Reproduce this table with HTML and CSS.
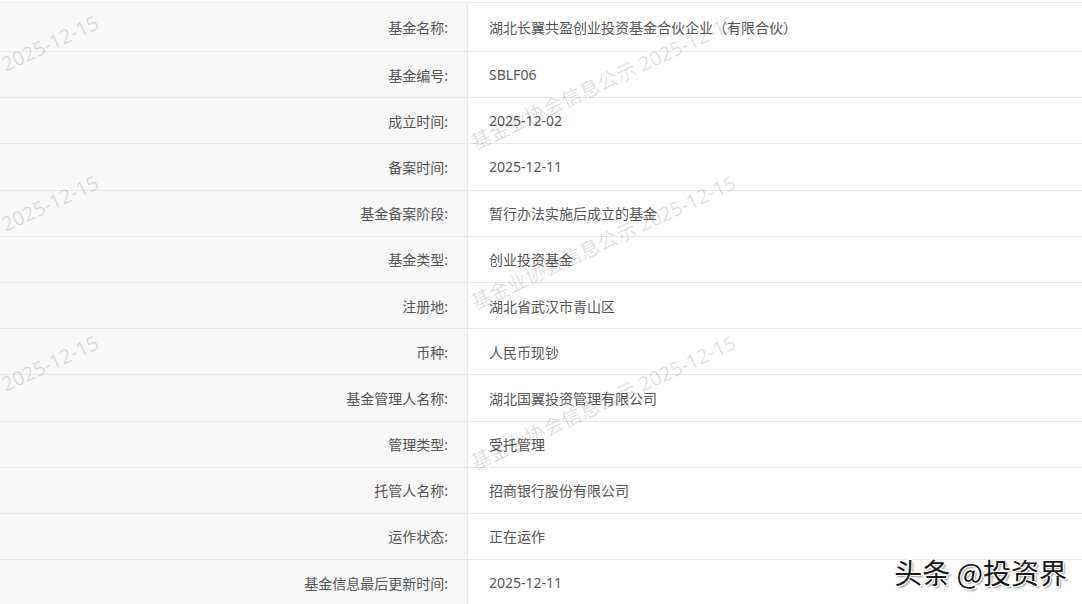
FILE: index.html
```html
<!DOCTYPE html>
<html lang="zh-CN">
<head>
  <meta charset="UTF-8" />
  <meta name="viewport" content="width=device-width, initial-scale=1.0"/>
  <title>基金信息公示</title>
  <link rel="stylesheet" href="styles.css">
</head>
<body>

  <div class="page">
    <!-- 基金信息表 -->
    <div class="info-table">
      <div class="row"><div class="label">基金名称:</div><div class="value">湖北长翼共盈创业投资基金合伙企业（有限合伙）</div></div>
      <div class="row"><div class="label">基金编号:</div><div class="value">SBLF06</div></div>
      <div class="row"><div class="label">成立时间:</div><div class="value">2025-12-02</div></div>
      <div class="row"><div class="label">备案时间:</div><div class="value">2025-12-11</div></div>
      <div class="row"><div class="label">基金备案阶段:</div><div class="value">暂行办法实施后成立的基金</div></div>
      <div class="row"><div class="label">基金类型:</div><div class="value">创业投资基金</div></div>
      <div class="row"><div class="label">注册地:</div><div class="value">湖北省武汉市青山区</div></div>
      <div class="row"><div class="label">币种:</div><div class="value">人民币现钞</div></div>
      <div class="row"><div class="label">基金管理人名称:</div><div class="value">湖北国翼投资管理有限公司</div></div>
      <div class="row"><div class="label">管理类型:</div><div class="value">受托管理</div></div>
      <div class="row"><div class="label">托管人名称:</div><div class="value">招商银行股份有限公司</div></div>
      <div class="row"><div class="label">运作状态:</div><div class="value">正在运作</div></div>
      <div class="row"><div class="label">基金信息最后更新时间:</div><div class="value">2025-12-11</div></div>
    </div>

    <!-- 水印 -->
    <div class="watermarks">
      <span class="wm wm-left wm-r1">基金业协会信息公示 2025-12-15</span>
      <span class="wm wm-left wm-r2">基金业协会信息公示 2025-12-15</span>
      <span class="wm wm-left wm-r3">基金业协会信息公示 2025-12-15</span>
      <span class="wm wm-mid wm-r1">基金业协会信息公示 2025-12-15</span>
      <span class="wm wm-mid wm-r2">基金业协会信息公示 2025-12-15</span>
      <span class="wm wm-mid wm-r3">基金业协会信息公示 2025-12-15</span>
    </div>

    <div class="brand">头条 @投资界</div>
  </div>

</body>
</html>
```

FILE: styles.css
```css
body {
  margin: 0;
  padding: 0;
  background: #fff;
  font-family: "Noto Sans", "Noto Sans CJK SC", sans-serif;
  overflow: hidden;
}

.page {
  position: relative;
  width: 1082px;
  height: 604px;
  overflow: hidden;
}

.info-table {
  padding-top: 2px;
}

.row {
  display: flex;
  height: 46.2px;
  box-sizing: border-box;
  border-bottom: 1px solid #e9e9e9;
}

.row:first-child {
  height: 50px;
  border-top: 1px solid #ececec;
}

.label {
  width: 468px;
  box-sizing: border-box;
  padding-right: 19px;
  background: #f7f7f7;
  border-right: 1px solid #e9e9e9;
  color: #555;
  font-size: 14px;
  display: flex;
  align-items: center;
  justify-content: flex-end;
}

.value {
  flex: 1;
  padding-left: 21px;
  color: #555;
  font-size: 14px;
  display: flex;
  align-items: center;
}

.watermarks {
  position: absolute;
  inset: 0;
  pointer-events: none;
}

.wm {
  position: absolute;
  white-space: nowrap;
  font-size: 20px;
  line-height: 20px;
  color: rgba(0, 0, 0, 0.13);
  transform-origin: 0 50%;
  transform: rotate(-25deg);
}

.wm-left { left: -165px; }
.wm-mid { left: 472px; }
.wm-r1 { top: 134px; }
.wm-r2 { top: 294px; }
.wm-r3 { top: 454px; }

.brand {
  position: absolute;
  right: 15px;
  bottom: 16px;
  font-size: 28px;
  line-height: 32px;
  color: #1a1a1a;
  font-family: "Noto Sans CJK SC", sans-serif;
  text-shadow: -1px -1px 0 #fff, 1px -1px 0 #fff, -1px 1px 0 #fff, 1px 1px 0 #fff, 2px 2px 2px rgba(0, 0, 0, 0.45);
}
```
